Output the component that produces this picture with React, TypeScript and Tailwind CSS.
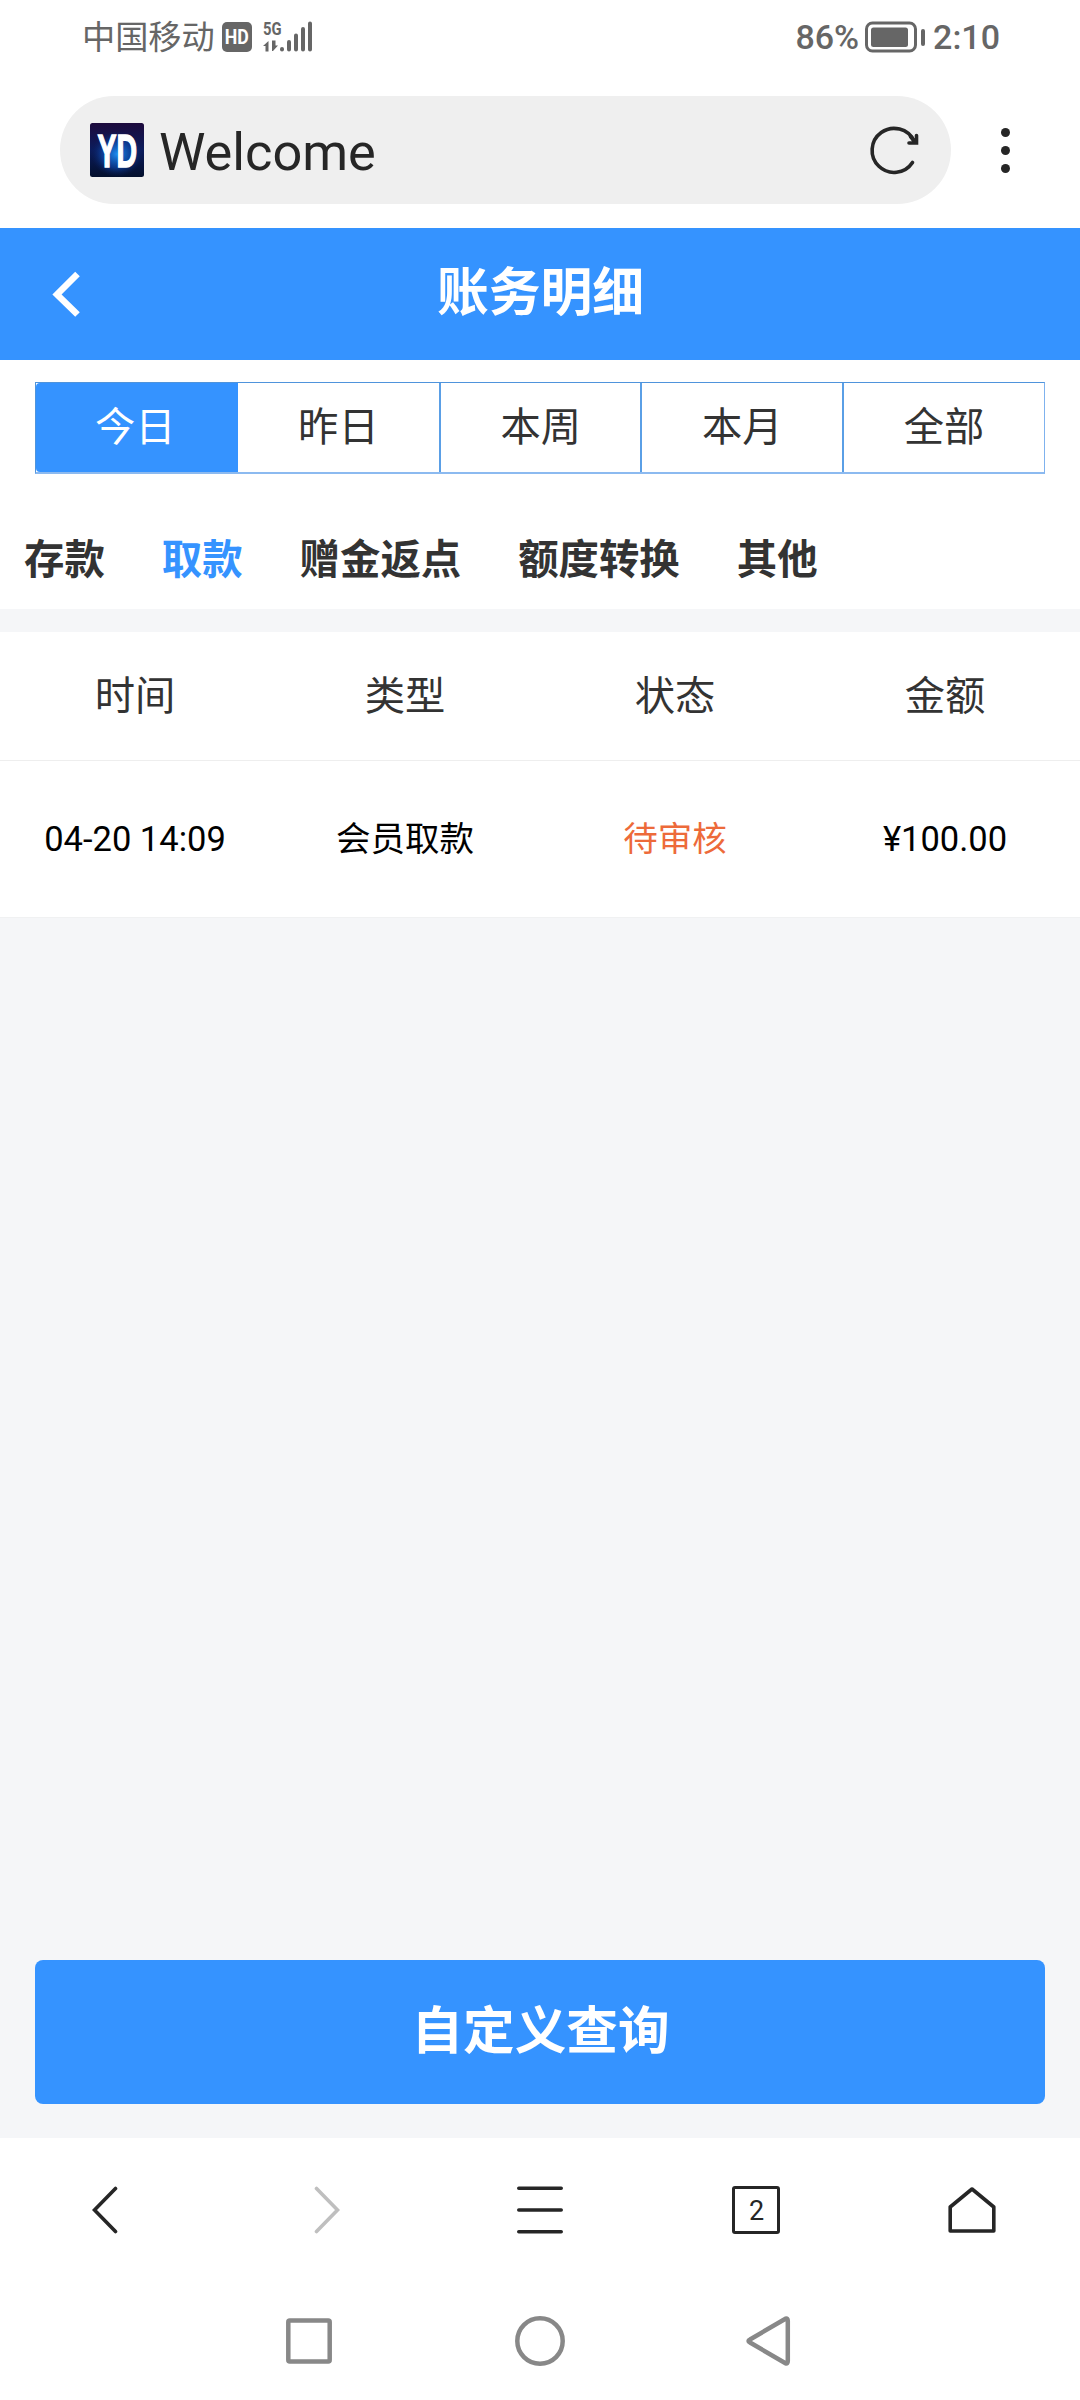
import type { ReactNode } from "react"

type RecordRow = {
    time: string
    type: string
    status: string
    amount: string
}

const RANGES = ["今日", "昨日", "本周", "本月", "全部"]
const CATEGORIES = ["存款", "取款", "赠金返点", "额度转换", "其他"]
const COLUMNS = ["时间", "类型", "状态", "金额"]

const ROWS: RecordRow[] = [
    { time: "04-20 14:09", type: "会员取款", status: "待审核", amount: "¥100.00" },
]

function SignalIcon() {
    return (
        <svg width="52" height="46" viewBox="0 -6 52 46" fill="#666">
            <text
                transform="translate(1 14.5) scale(.8 1)"
                fontFamily="Roboto, sans-serif"
                fontSize="18.500"
                fontWeight="700"
            >
                5G
            </text>
            <path d="M6.500 21v10.500h-3V26H1z" />
            <path d="M10 20.500v10.500h1l5-5.500h-2.500v-5z" />
            <g stroke="#666" strokeWidth="4" strokeLinecap="round">
                <path d="M20 29v.500M27 22v7.500M34 15.500v14M41 9v20.500M48 3.500v26" />
            </g>
        </svg>
    )
}

function StatusBar() {
    return (
        <div className="flex h-[74px] items-center justify-between pr-[80px] pl-[82px] text-[#666]">
            <div className="flex items-center">
                <span className="pt-[2px] text-[33.200px] leading-[44px]">中国移动</span>
                <svg className="ml-[7px]" width="30" height="30" viewBox="0 0 30 30">
                    <rect width="30" height="30" rx="5" fill="#666" />
                    <text
                        transform="translate(2.800 22) scale(.91 1)"
                        fill="#fff"
                        fontFamily="Roboto, sans-serif"
                        fontSize="19.500"
                        fontWeight="700"
                    >
                        HD
                    </text>
                </svg>
                <div className="ml-[10px]">
                    <SignalIcon />
                </div>
            </div>
            <div className="flex items-center font-medium">
                <span className="text-[34px] leading-[40px]">86%</span>
                <svg className="mr-[8px] ml-[6px]" width="60" height="32" viewBox="0 0 60 32">
                    <rect x="1.500" y="2" width="49" height="28" rx="6" fill="none" stroke="#666" strokeWidth="3" />
                    <rect x="6" y="6.500" width="37" height="19.500" rx="2.500" fill="#666" />
                    <rect x="56" y="8" width="4" height="17" rx="2" fill="#666" />
                </svg>
                <span className="text-[34px] leading-[40px]">2:10</span>
            </div>
        </div>
    )
}

function SiteIcon() {
    return (
        <svg width="54" height="54" viewBox="0 0 54 54">
            <defs>
                <linearGradient id="siteBg" x1="0" y1="0" x2="0" y2="1">
                    <stop offset="0" stopColor="#1d0a3c" />
                    <stop offset=".5" stopColor="#0b1c5c" />
                    <stop offset="1" stopColor="#030f2c" />
                </linearGradient>
                <radialGradient id="siteGlow">
                    <stop offset="0" stopColor="#1d8cf0" />
                    <stop offset=".6" stopColor="#0d46a6" stopOpacity=".7" />
                    <stop offset="1" stopColor="#0a1f60" stopOpacity="0" />
                </radialGradient>
            </defs>
            <rect width="54" height="54" rx="2.500" fill="url(#siteBg)" />
            <ellipse cx="27" cy="31" rx="26" ry="23" fill="url(#siteGlow)" />
            <text
                transform="translate(7.500 43.500) scale(.62 1)"
                fill="#fff"
                stroke="#fff"
                strokeWidth="1.500"
                fontFamily="'Liberation Sans', sans-serif"
                fontSize="46"
                fontWeight="700"
            >
                YD
            </text>
        </svg>
    )
}

function AddressBar() {
    return (
        <div className="flex h-[154px] items-start pt-[22px] pl-[60px]">
            <div className="flex h-[108px] w-[891px] items-center rounded-full bg-[#efefef] pr-[31px] pl-[30px]">
                <SiteIcon />
                <span className="ml-[15px] flex-1 pt-[3px] text-[52.300px] leading-[62px] text-[#262626]">Welcome</span>
                <svg width="52" height="52" viewBox="0 0 52 52" fill="none" stroke="#262626" strokeWidth="3.600" strokeLinecap="round">
                    <path d="M44.500 38.500A22 22 0 1 1 46 17" />
                    <path d="M48.500 11.500v7.500h-7.500M42.500 12.500l5 6" />
                </svg>
            </div>
            <div className="ml-[49.500px] flex h-[108px] flex-col items-center justify-center gap-[9px]">
                <span className="size-[9px] rounded-full bg-[#262626]" />
                <span className="size-[9px] rounded-full bg-[#262626]" />
                <span className="size-[9px] rounded-full bg-[#262626]" />
            </div>
        </div>
    )
}

function PageHeader() {
    return (
        <header className="grid h-[132px] grid-cols-[1fr_auto_1fr] items-center bg-[#3593ff] text-white">
            <svg className="ml-[52px]" width="30" height="46" viewBox="0 0 30 46" fill="none" stroke="#fff" strokeWidth="6.500">
                <path d="M25.500 3L5 23.500 25.500 43.500" />
            </svg>
            <h1 className="pl-px text-[51.800px] leading-[70px] font-bold">账务明细</h1>
        </header>
    )
}

function RangeTabs({ active }: { active: number }) {
    return (
        <div className="px-[35px] pt-[22px]">
            <div className="grid h-[92px] grid-cols-5 border border-b-2 border-[#4f94dc] border-r-[#7fb2ee] border-b-[#8cbaf0]">
                {RANGES.map((range, i) => (
                    <button
                        key={range}
                        className={`text-[40.300px] leading-[56px] ${
                            i === active ? "rounded-l-[4px] bg-[#3593ff] pr-[3px] text-white" : "text-[#333]"
                        } ${i > 1 ? "-ml-[0.500px] border-l-2 border-[#5a9fe6]" : ""}`}
                    >
                        {range}
                    </button>
                ))}
            </div>
        </div>
    )
}

function CategoryTabs({ active }: { active: number }) {
    return (
        <nav className="flex h-[135px] gap-[57px] pt-[59px] pl-[24px] text-[40.400px] leading-[56px] font-bold">
            {CATEGORIES.map((category, i) => (
                <span key={category} className={i === active ? "text-[#3593ff]" : "text-[#333]"}>
                    {category}
                </span>
            ))}
        </nav>
    )
}

function RecordTable() {
    return (
        <section className="mt-[23px] bg-white text-center">
            <div className="grid h-[129px] grid-cols-4 items-center border-b border-[#eee] pt-[2px] text-[40.300px] leading-[56px] text-[#333]">
                {COLUMNS.map((column) => (
                    <span key={column}>{column}</span>
                ))}
            </div>
            {ROWS.map((row) => (
                <div
                    key={row.time}
                    className="grid h-[157px] grid-cols-4 items-center border-b border-[#f0f1f2] text-[34.500px] leading-[50px] text-black"
                >
                    <span>{row.time}</span>
                    <span>{row.type}</span>
                    <span className="text-[#ed6a3a]">{row.status}</span>
                    <span>{row.amount}</span>
                </div>
            ))}
        </section>
    )
}

function ToolItem({ children }: { children: ReactNode }) {
    return <div className="flex items-center justify-center">{children}</div>
}

function BrowserToolbar() {
    return (
        <div className="grid h-[144px] grid-cols-5 bg-white">
            <ToolItem>
                <svg className="mr-[7px]" width="26" height="48" viewBox="0 0 26 48" fill="none" stroke="#262626" strokeWidth="3.600" strokeLinecap="round">
                    <path d="M23.500 2.500L2.500 24l21 21.500" />
                </svg>
            </ToolItem>
            <ToolItem>
                <svg className="ml-[6px]" width="26" height="48" viewBox="0 0 26 48" fill="none" stroke="#bfbfbf" strokeWidth="3.600" strokeLinecap="round">
                    <path d="M2.500 2.500L23.500 24l-21 21.500" />
                </svg>
            </ToolItem>
            <ToolItem>
                <svg width="48" height="48" viewBox="0 0 48 48" stroke="#262626" strokeWidth="3.600" strokeLinecap="round">
                    <path d="M2.800 2.200h42.400M2.800 24h42.400M2.800 45.800h42.400" />
                </svg>
            </ToolItem>
            <ToolItem>
                <div className="flex size-[48px] items-center justify-center rounded-[3px] border-[3.500px] border-[#262626] pt-[2px] pl-px text-[27px] leading-[30px] text-[#262626]">
                    2
                </div>
            </ToolItem>
            <ToolItem>
                <svg width="48" height="48" viewBox="0 0 48 48" fill="none" stroke="#262626" strokeWidth="3.600" strokeLinejoin="round">
                    <path d="M2.200 21L24 3l21.800 18v24H2.200z" />
                </svg>
            </ToolItem>
        </div>
    )
}

function SystemNav() {
    return (
        <div className="flex h-[118px] items-center justify-center bg-white">
            <svg width="512" height="52" viewBox="0 0 512 52" fill="none" stroke="#888" strokeWidth="4.500" strokeLinejoin="round">
                <rect x="4.300" y="5.500" width="41.400" height="41" rx="1.500" />
                <circle cx="256" cy="26" r="22.700" />
                <path d="M501.500 3.700Q503.800 3 503.800 6v40q0 3-2.300 2.300L466 27.500q-3-1.500 0-3z" />
            </svg>
        </div>
    )
}

export default function App() {
    return (
        <div className="flex h-[2400px] w-[1080px] flex-col overflow-hidden bg-[#f5f6f8] font-[Roboto,'Noto_Sans_CJK_SC',sans-serif]">
            <div className="bg-white">
                <StatusBar />
                <AddressBar />
                <PageHeader />
                <RangeTabs active={0} />
                <CategoryTabs active={1} />
            </div>
            <RecordTable />
            <div className="mt-auto px-[35px] pb-[34px]">
                <button className="h-[144px] w-full rounded-[8px] bg-[#3593ff] pl-px text-[51.600px] leading-[70px] font-bold text-white">
                    自定义查询
                </button>
            </div>
            <BrowserToolbar />
            <SystemNav />
        </div>
    )
}
